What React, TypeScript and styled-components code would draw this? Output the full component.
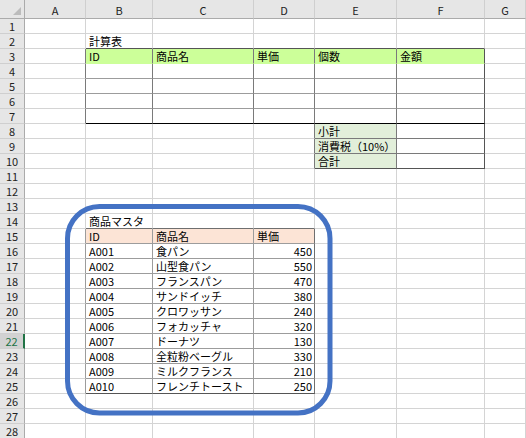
import React from 'react';
import styled, { createGlobalStyle } from 'styled-components';

const GlobalStyle = createGlobalStyle`
  html, body { margin: 0; padding: 0; background: #ffffff; overflow: hidden; }
  body { font-family: "Noto Sans CJK JP", "Noto Sans", sans-serif; }
`;

const COLS = ['A', 'B', 'C', 'D', 'E', 'F', 'G'];
const ROWS = 28;
const GRID = '#d4d4d4';
const DARK = '#7a7a7a';
const MID = '#9c9c9c';
const GREEN = '#ccff99';
const LIGHTGREEN = '#e2efda';
const PEACH = '#fce4d6';

const Sheet = styled.div`
  position: relative;
  width: 526px;
  height: 438px;
  overflow: hidden;
  display: grid;
  grid-template-columns: 25px 61px 67px 101px 61px 82px 88px 1fr;
  grid-template-rows: 19px repeat(${ROWS}, 15px);
  font-family: "Noto Sans CJK JP", "Noto Sans", sans-serif;
  color: #000;
`;

const Corner = styled.div`
  background: #e6e6e6;
  border-right: 1px solid #ababab;
  border-bottom: 1px solid #ababab;
  box-sizing: border-box;
  display: flex;
  align-items: flex-end;
  justify-content: flex-end;
  padding: 0 3px 3px 0;
`;

const ColHeader = styled.div`
  background: #e6e6e6;
  border-right: 1px solid #cfcfcf;
  border-bottom: 1px solid #ababab;
  box-sizing: border-box;
  display: flex;
  align-items: center;
  justify-content: center;
  font-size: 11px;
  color: #222;
  line-height: 12px;
  padding-top: 1px;
  overflow: hidden;
`;

const RowHeader = styled.div<{ $active?: boolean }>`
  background: ${(p) => (p.$active ? '#d2d2d2' : '#e6e6e6')};
  border-right: ${(p) => (p.$active ? '2px solid #217346' : '1px solid #ababab')};
  border-bottom: 1px solid #cfcfcf;
  box-sizing: border-box;
  display: flex;
  align-items: center;
  justify-content: center;
  font-size: 11px;
  color: ${(p) => (p.$active ? '#217346' : '#222')};
  line-height: 12px;
  overflow: hidden;
`;

const Cell = styled.div<{
  $r: string;
  $b: string;
  $bg: string;
  $align: 'left' | 'right';
  $top?: boolean;
}>`
  background: ${(p) => p.$bg};
  border-right: 1px solid ${(p) => p.$r};
  border-bottom: 1px solid ${(p) => p.$b};
  box-shadow: ${(p) => (p.$top ? 'inset 0 1px 0 #000' : 'none')};
  box-sizing: border-box;
  display: flex;
  align-items: flex-end;
  justify-content: ${(p) => (p.$align === 'right' ? 'flex-end' : 'flex-start')};
  padding: 0 2px 0 3px;
  font-size: 11px;
  line-height: 13px;
  white-space: nowrap;
  overflow: visible;
`;

const Overlay = styled.svg`
  position: absolute;
  left: 0;
  top: 0;
  pointer-events: none;
`;

type CellDef = { text?: string; align?: 'left' | 'right' };

const master: [string, string, string][] = [
  ['A001', '食パン', '450'],
  ['A002', '山型食パン', '550'],
  ['A003', 'フランスパン', '470'],
  ['A004', 'サンドイッチ', '380'],
  ['A005', 'クロワッサン', '240'],
  ['A006', 'フォカッチャ', '320'],
  ['A007', 'ドーナツ', '130'],
  ['A008', '全粒粉ベーグル', '330'],
  ['A009', 'ミルクフランス', '210'],
  ['A010', 'フレンチトースト', '250'],
];

const content: Record<string, CellDef> = {
  B2: { text: '計算表' },
  B3: { text: 'ID' },
  C3: { text: '商品名' },
  D3: { text: '単価' },
  E3: { text: '個数' },
  F3: { text: '金額' },
  E8: { text: '小計' },
  E9: { text: '消費税（10%）' },
  E10: { text: '合計' },
  B14: { text: '商品マスタ' },
  B15: { text: 'ID' },
  C15: { text: '商品名' },
  D15: { text: '単価' },
};
master.forEach(([id, name, price], i) => {
  const r = 16 + i;
  content[`B${r}`] = { text: id };
  content[`C${r}`] = { text: name };
  content[`D${r}`] = { text: price, align: 'right' };
});

const inRange = (c: number, r: number, c1: number, c2: number, r1: number, r2: number) =>
  c >= c1 && c <= c2 && r >= r1 && r <= r2;

// column indices: A=0 B=1 C=2 D=3 E=4 F=5 G=6
function cellStyle(c: number, r: number) {
  let right = GRID;
  let bottom = GRID;
  let bg = '#ffffff';
  let top = false;

  // Table 1: B3:F7
  if (inRange(c, r, 1, 5, 3, 7)) {
    right = c === 5 ? '#555555' : DARK;
    bottom = MID;
    if (r === 3) {
      bg = GREEN;
      bottom = GREEN;
    }
    if (r === 7) bottom = '#000';
  }
  if (c === 0 && r >= 3 && r <= 7) right = DARK;
  if (r === 2 && c >= 1 && c <= 5) bottom = '#555555';

  // Totals: E8:F10
  if (inRange(c, r, 4, 5, 8, 10)) {
    right = c === 5 ? '#555555' : DARK;
    bottom = r === 10 ? '#555555' : DARK;
    if (c === 4) bg = LIGHTGREEN;
  }
  if (c === 3 && r >= 8 && r <= 10) right = DARK;

  // Master table: B15:D25
  if (inRange(c, r, 1, 3, 15, 25)) {
    right = c === 3 ? '#6f6f6f' : MID;
    bottom = r === 25 ? '#555555' : MID;
    if (r === 15) bg = PEACH;
  }
  if (c === 0 && r >= 15 && r <= 25) right = MID;
  if (r === 14 && c >= 1 && c <= 3) bottom = '#6f6f6f';

  return { right, bottom, bg, top };
}

export default function App() {
  const cells: React.ReactNode[] = [];
  cells.push(
    <Corner key="corner">
      <svg width="8" height="8" viewBox="0 0 8 8">
        <polygon points="8,0 8,8 0,8" fill="#bcbcbc" />
      </svg>
    </Corner>
  );
  COLS.forEach((col) => cells.push(<ColHeader key={`h${col}`}>{col}</ColHeader>));
  for (let r = 1; r <= ROWS; r++) {
    cells.push(
      <RowHeader key={`r${r}`} $active={r === 22}>
        {r}
      </RowHeader>
    );
    COLS.forEach((col, c) => {
      const s = cellStyle(c, r);
      const def = content[`${col}${r}`];
      cells.push(
        <Cell
          key={`${col}${r}`}
          $r={s.right}
          $b={s.bottom}
          $bg={s.bg}
          $top={s.top}
          $align={def?.align ?? 'left'}
        >
          {def?.text}
        </Cell>
      );
    });
  }

  return (
    <>
      <GlobalStyle />
      <Sheet>
        {cells}
        <Overlay width="526" height="438" viewBox="0 0 526 438">
          <rect
            x="67.5"
            y="206.5"
            width="262.5"
            height="206.5"
            rx="32"
            ry="32"
            fill="none"
            stroke="#4472c4"
            strokeWidth="5"
          />
        </Overlay>
      </Sheet>
    </>
  );
}
